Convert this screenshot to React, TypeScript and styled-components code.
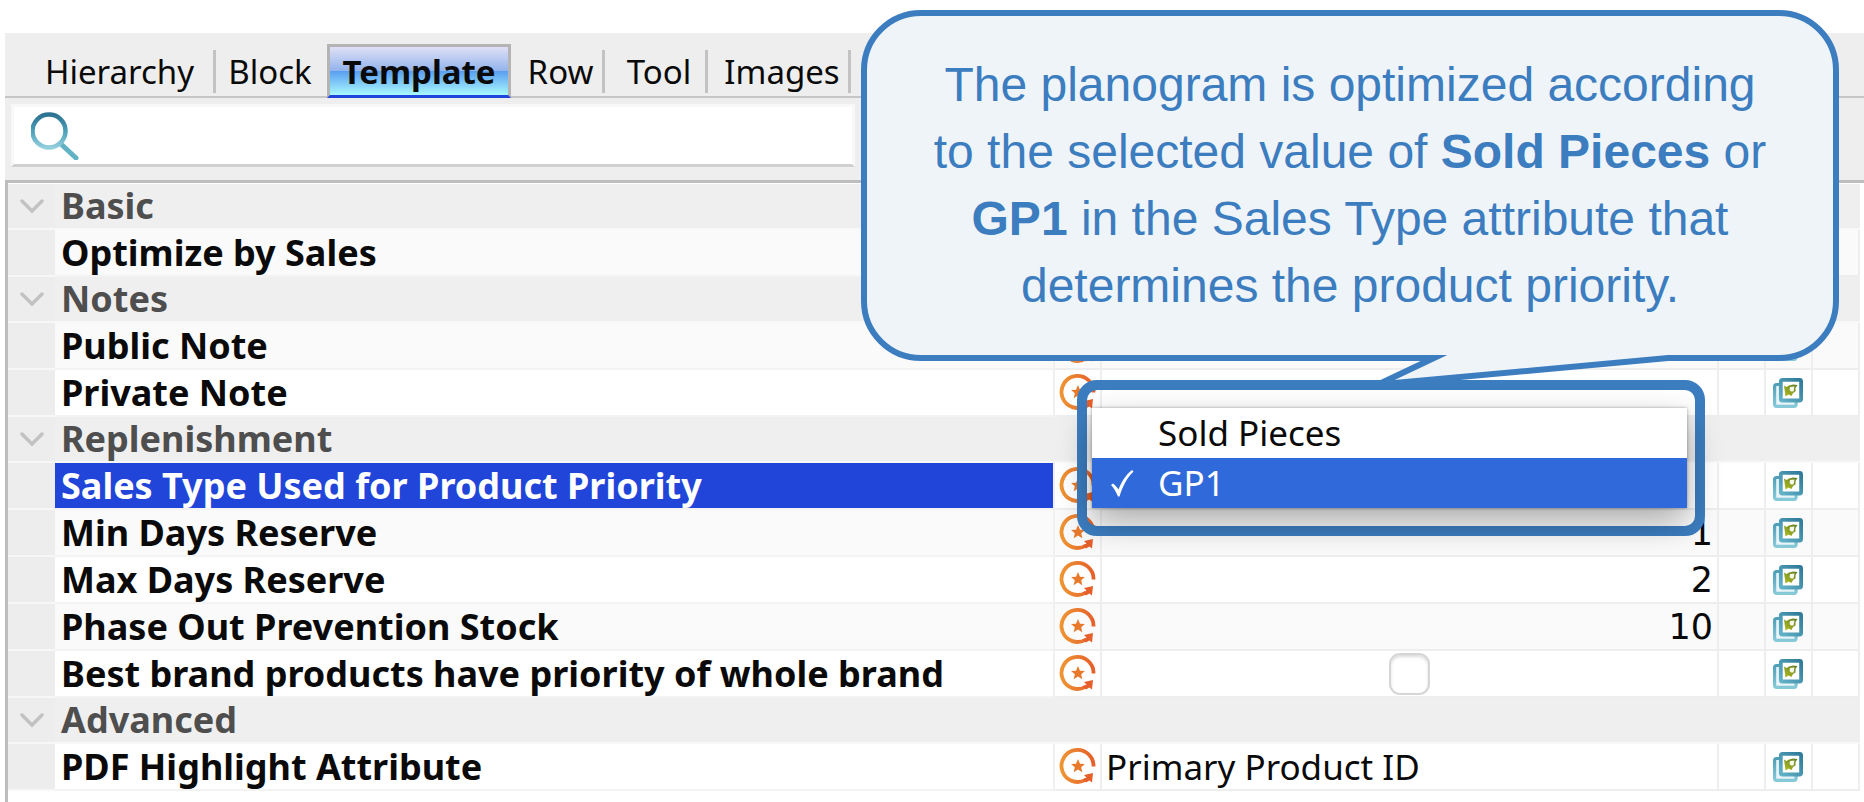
import React from 'react';
import styled, { createGlobalStyle, css } from 'styled-components';

const blue = '#3c7dc0';

const GlobalStyle = createGlobalStyle`
  * { box-sizing: border-box; }
  body {
    margin: 0;
    background: #fff;
    color: #0a0a0a;
    font-family: "Noto Sans", "Open Sans", sans-serif;
  }
  button, input { font: inherit; color: inherit; }
`;

const Page = styled.main`
  position: relative;
  min-height: 100vh;
  padding: 33px 0 0 5px;
  overflow: hidden;
`;

const Panel = styled.section`
  display: flex;
  flex-direction: column;
  min-height: calc(100vh - 33px);
  background: #eee;
`;

const TabBar = styled.div`
  display: grid;
  grid-template-columns: 190px 111px 184px 94px 103px 143px;
  height: 65px;
  padding: 11px 0 0 21px;
  border-bottom: 2px solid #c6c6c6;
`;

const Tab = styled.button<{ $active?: boolean }>`
  position: relative;
  height: 54px;
  padding: 0 3px 0 0;
  border: 0;
  background: none;
  font-size: 33px;
  white-space: nowrap;

  [aria-selected='true'] ~ & {
    padding-left: 8px;
  }

  ${({ $active }) =>
    $active
      ? css`
          padding: 0;
          border: 3px solid #b4b4b4;
          border-bottom-color: #2145dc;
          background: linear-gradient(#e0e0f6 0%, #93b4ec 49%, #5b9ff0 51%, #a8f8fe 100%) padding-box;
          font-weight: 700;
        `
      : css`
          &:not(:has(+ [aria-selected='true']))::after {
            content: '';
            position: absolute;
            top: 6px;
            right: 0;
            width: 3px;
            height: 43px;
            background: #c2c2c2;
          }
        `}
`;

const SearchRow = styled.div`
  display: flex;
  height: 82px;
  padding: 6px 6px 13px;
`;

const SearchBox = styled.label`
  display: flex;
  align-items: center;
  flex: 0 0 calc(50% - 80px);
  gap: 12px;
  padding-left: 17px;
  border: 3px solid #f8f8f8;
  border-bottom-color: #d0d0d0;
  background: #fff;
`;

const SearchInput = styled.input`
  flex: 1;
  min-width: 0;
  border: 0;
  outline: 0;
  background: none;
  font-size: 33px;
`;

const Sheet = styled.div`
  flex: 1;
  padding: 1px 4px 0 0;
  border-top: 3px solid #bdbdbd;
  border-left: 3px solid #bdbdbd;
  background: #fff;
`;

const Grid = styled.table`
  width: 100%;
  table-layout: fixed;
  border-spacing: 0;
`;

const Col = styled.col<{ $width?: string }>`
  width: ${({ $width }) => $width ?? 'auto'};
`;

const GroupRow = styled.tr`
  height: 46px;
  background: #efefef;
`;

const ItemRow = styled.tr<{ $tint?: boolean }>`
  height: 47px;
  background: ${({ $tint }) => ($tint ? '#fafafa' : '#fff')};
`;

const Gutter = styled.td`
  padding: 0;
  border-bottom: 2px solid #f7f7f7;
  background: #ededed;
  text-align: center;
  line-height: 0;
`;

const Toggle = styled.button`
  padding: 0;
  border: 0;
  background: none;
  line-height: 0;
`;

const label = css`
  padding: 0 6px;
  font-size: 36px;
  font-weight: 700;
  line-height: 44px;
  text-align: left;
  white-space: nowrap;
`;

const GroupName = styled.th`
  ${label}
  border-bottom: 2px solid #f8f8f8;
  color: #4e4e4e;
`;

const Name = styled.th<{ $selected?: boolean }>`
  ${label}
  border-bottom: 2px solid #f3f3f3;
  border-right: 2px solid #f0f0f0;
  ${({ $selected }) =>
    $selected &&
    css`
      background: #2145d9 padding-box;
      color: #fff;
    `}
`;

const Cell = styled.td<{ $align?: 'left' | 'center' | 'right' }>`
  padding: 0 4px;
  border-right: 2px solid #eee;
  border-bottom: 2px solid #eee;
  font-size: 35px;
  line-height: 44px;
  text-align: ${({ $align }) => $align ?? 'left'};
  white-space: nowrap;
  ${({ $align }) =>
    $align === 'right' &&
    css`
      font-family: "DejaVu Sans", sans-serif;
    `}
`;

const IconCell = styled(Cell)`
  padding: 0;
  text-align: center;
  line-height: 0;
`;

const CheckBox = styled.input`
  appearance: none;
  display: block;
  width: 41px;
  height: 42px;
  margin: 0 auto;
  border: 2px solid #d6d6d6;
  border-radius: 11px;
  background: #fff;
  box-shadow: inset 0 2px 3px #dcdcdc;
`;

const Frame = styled.div`
  position: absolute;
  top: 380px;
  right: 159px;
  width: 628px;
  padding: 18px 8px 18px 5px;
  border: 10px solid ${blue};
  border-radius: 20px;
`;

const Menu = styled.div`
  background: #fff;
  box-shadow: 0 0 3px rgba(0, 0, 0, 0.35), 0 14px 34px rgba(0, 0, 0, 0.32);
`;

const Option = styled.button<{ $selected?: boolean }>`
  display: grid;
  grid-template-columns: 48px 1fr;
  align-items: center;
  width: 100%;
  height: 50px;
  padding: 0 0 0 18px;
  border: 0;
  background: ${({ $selected }) => ($selected ? '#3069da' : '#fff')};
  color: ${({ $selected }) => ($selected ? '#fff' : '#0a0a0a')};
  font-size: 35px;
  line-height: 50px;
  text-align: left;
`;

const OptionText = styled.span`
  grid-column: 2;
`;

const Callout = styled.aside`
  position: absolute;
  top: 10px;
  right: 25px;
  width: 978px;
  padding: 35px 0 36px;
  border: 6px solid ${blue};
  border-radius: 60px;
  background: #eff4f9;
  color: ${blue};
  font-family: "Liberation Sans", Arial, sans-serif;
  font-size: 48px;
  line-height: 67px;
  text-align: center;
  white-space: nowrap;
`;

const CalloutText = styled.p`
  margin: 0;
`;

const Tail = styled.svg`
  position: absolute;
  top: 339px;
  left: 493px;
`;

const SearchIcon = () => (
  <svg width="48" height="48" viewBox="0 0 48 48" fill="none" aria-hidden="true">
    <defs>
      <linearGradient id="lens" x1="0" y1="0" x2="0" y2="1">
        <stop offset="0" stopColor="#2c7392" />
        <stop offset="0.5" stopColor="#4a9fb8" />
        <stop offset="1" stopColor="#93cfdd" />
      </linearGradient>
    </defs>
    <path d="M30 32 45 46" stroke="#62b2c6" strokeWidth="5" strokeLinecap="round" />
    <circle cx="18" cy="19" r="16.500" stroke="url(#lens)" strokeWidth="4.500" />
  </svg>
);

const Chevron = () => (
  <svg width="24" height="16" viewBox="0 0 24 16" fill="none" aria-hidden="true">
    <path d="M2 3 12 13 22 3" stroke="#c2c2c2" strokeWidth="3.500" strokeLinecap="round" />
  </svg>
);

const ResetIcon = () => (
  <svg width="38" height="38" viewBox="0 0 38 38" fill="none" aria-hidden="true">
    <defs>
      <linearGradient id="ring" x1="0" y1="0" x2="1" y2="0">
        <stop offset="0" stopColor="#ee9433" />
        <stop offset="1" stopColor="#e5602a" />
      </linearGradient>
    </defs>
    <path d="M34.500 18.500A16 16 0 1 0 27 31.500" stroke="url(#ring)" strokeWidth="3.800" />
    <path d="M25 27 34 25 33 34.500 30.300 32.500 27 34.500 24 31.500 27.500 29.500Z" fill="#e5602a" />
    <path d="M19 11 21 15.700 25.900 16.100 22.200 19.300 23.300 24.200 19 21.600 14.700 24.200 15.800 19.300 12.100 16.100 17 15.700Z" fill="#e8792b" />
  </svg>
);

const VariantIcon = () => (
  <svg width="30" height="30" viewBox="0 0 30 30" fill="none" aria-hidden="true">
    <defs>
      <linearGradient id="back" x1="0" y1="0" x2="0" y2="1">
        <stop offset="0" stopColor="#4f9fb9" />
        <stop offset="1" stopColor="#86c9d8" />
      </linearGradient>
      <linearGradient id="front" x1="1" y1="0" x2="0" y2="1">
        <stop offset="0" stopColor="#2f7a98" />
        <stop offset="1" stopColor="#62b2c8" />
      </linearGradient>
      <linearGradient id="leaf" x1="1" y1="0" x2="0" y2="1">
        <stop offset="0" stopColor="#5d7a2a" />
        <stop offset="1" stopColor="#b5bf1e" />
      </linearGradient>
    </defs>
    <rect x="1.600" y="6.500" width="21.500" height="21.800" rx="2" fill="#e8f4f7" stroke="url(#back)" strokeWidth="3.200" />
    <rect x="7.800" y="1.900" width="20.300" height="20.600" rx="1.500" fill="#fff" stroke="url(#front)" strokeWidth="3.800" />
    <path d="M11 7.500 13.500 9 16 7.500 20 6.500 24.500 7 22.500 10 22.500 13.500 20 15 18.500 18 15.500 16.500 12.500 18.500Z" fill="url(#leaf)" />
    <path d="M17 9 21.500 8.500 20.500 13.500 18 13.500 16.500 12Z" fill="#f4f8ea" />
  </svg>
);

const CheckIcon = () => (
  <svg width="24" height="28" viewBox="0 0 24 28" aria-hidden="true">
    <path d="M1 16 3 14.500C5 16 7 18 8.500 20.500 11.500 13 15.500 6 22 1L23.500 2.500C17 9 13 16.500 9.500 27.500L8 27.500C6 23 4 19 1 16Z" fill="#fff" />
  </svg>
);

type Item = {
  name: string;
  value?: string;
  align?: 'left' | 'right';
  checkbox?: boolean;
  tint?: boolean;
  selected?: boolean;
};

const groups: { name: string; items: Item[] }[] = [
  { name: 'Basic', items: [{ name: 'Optimize by Sales', tint: true }] },
  { name: 'Notes', items: [{ name: 'Public Note', tint: true }, { name: 'Private Note' }] },
  {
    name: 'Replenishment',
    items: [
      { name: 'Sales Type Used for Product Priority', selected: true },
      { name: 'Min Days Reserve', value: '1', align: 'right', tint: true },
      { name: 'Max Days Reserve', value: '2', align: 'right' },
      { name: 'Phase Out Prevention Stock', value: '10', align: 'right', tint: true },
      { name: 'Best brand products have priority of whole brand', checkbox: true },
    ],
  },
  { name: 'Advanced', items: [{ name: 'PDF Highlight Attribute', value: 'Primary Product ID' }] },
];

const tabs = ['Hierarchy', 'Block', 'Template', 'Row', 'Tool', 'Images'];

export default function App() {
  return (
    <Page>
      <GlobalStyle />
      <Panel>
        <TabBar role="tablist">
          {tabs.map((t) => (
            <Tab key={t} role="tab" type="button" aria-selected={t === 'Template'} $active={t === 'Template'}>
              {t}
            </Tab>
          ))}
        </TabBar>
        <SearchRow>
          <SearchBox>
            <SearchIcon />
            <SearchInput type="search" aria-label="Search attributes" />
          </SearchBox>
        </SearchRow>
        <Sheet>
          <Grid>
            <colgroup>
              <Col $width="47px" />
              <Col $width="54%" />
              <Col $width="47px" />
              <Col />
              <Col $width="47px" />
              <Col $width="47px" />
              <Col $width="47px" />
            </colgroup>
            {groups.map((group) => (
              <tbody key={group.name}>
                <GroupRow>
                  <Gutter>
                    <Toggle type="button" aria-label={`Collapse ${group.name}`} aria-expanded>
                      <Chevron />
                    </Toggle>
                  </Gutter>
                  <GroupName scope="rowgroup" colSpan={6}>
                    {group.name}
                  </GroupName>
                </GroupRow>
                {group.items.map((item) => (
                  <ItemRow key={item.name} $tint={item.tint}>
                    <Gutter />
                    <Name scope="row" $selected={item.selected}>
                      {item.name}
                    </Name>
                    <IconCell>
                      <ResetIcon />
                    </IconCell>
                    <Cell $align={item.align}>
                      {item.checkbox ? <CheckBox type="checkbox" aria-label={item.name} /> : item.value}
                    </Cell>
                    <Cell />
                    <IconCell>
                      <VariantIcon />
                    </IconCell>
                    <Cell />
                  </ItemRow>
                ))}
              </tbody>
            ))}
          </Grid>
        </Sheet>
      </Panel>

      <Callout>
        <CalloutText>
          The planogram is optimized according
          <br />
          to the selected value of <b>Sold Pieces</b> or
          <br />
          <b>GP1</b> in the Sales Type attribute that
          <br />
          determines the product priority.
        </CalloutText>
        <Tail width="330" height="36" viewBox="0 0 330 36" fill="none" aria-hidden="true">
          <path d="M76 0 318 0 318 3 20 28 76 3Z" fill="#eff4f9" />
          <path d="M55 3H74L18 29.500 308 3H330" stroke={blue} strokeWidth="6" strokeMiterlimit="6" />
        </Tail>
      </Callout>

      <Frame>
        <Menu role="listbox" aria-label="Sales Type Used for Product Priority">
          <Option type="button" role="option" aria-selected={false}>
            <OptionText>Sold Pieces</OptionText>
          </Option>
          <Option type="button" role="option" aria-selected $selected>
            <CheckIcon />
            <OptionText>GP1</OptionText>
          </Option>
        </Menu>
      </Frame>
    </Page>
  );
}
